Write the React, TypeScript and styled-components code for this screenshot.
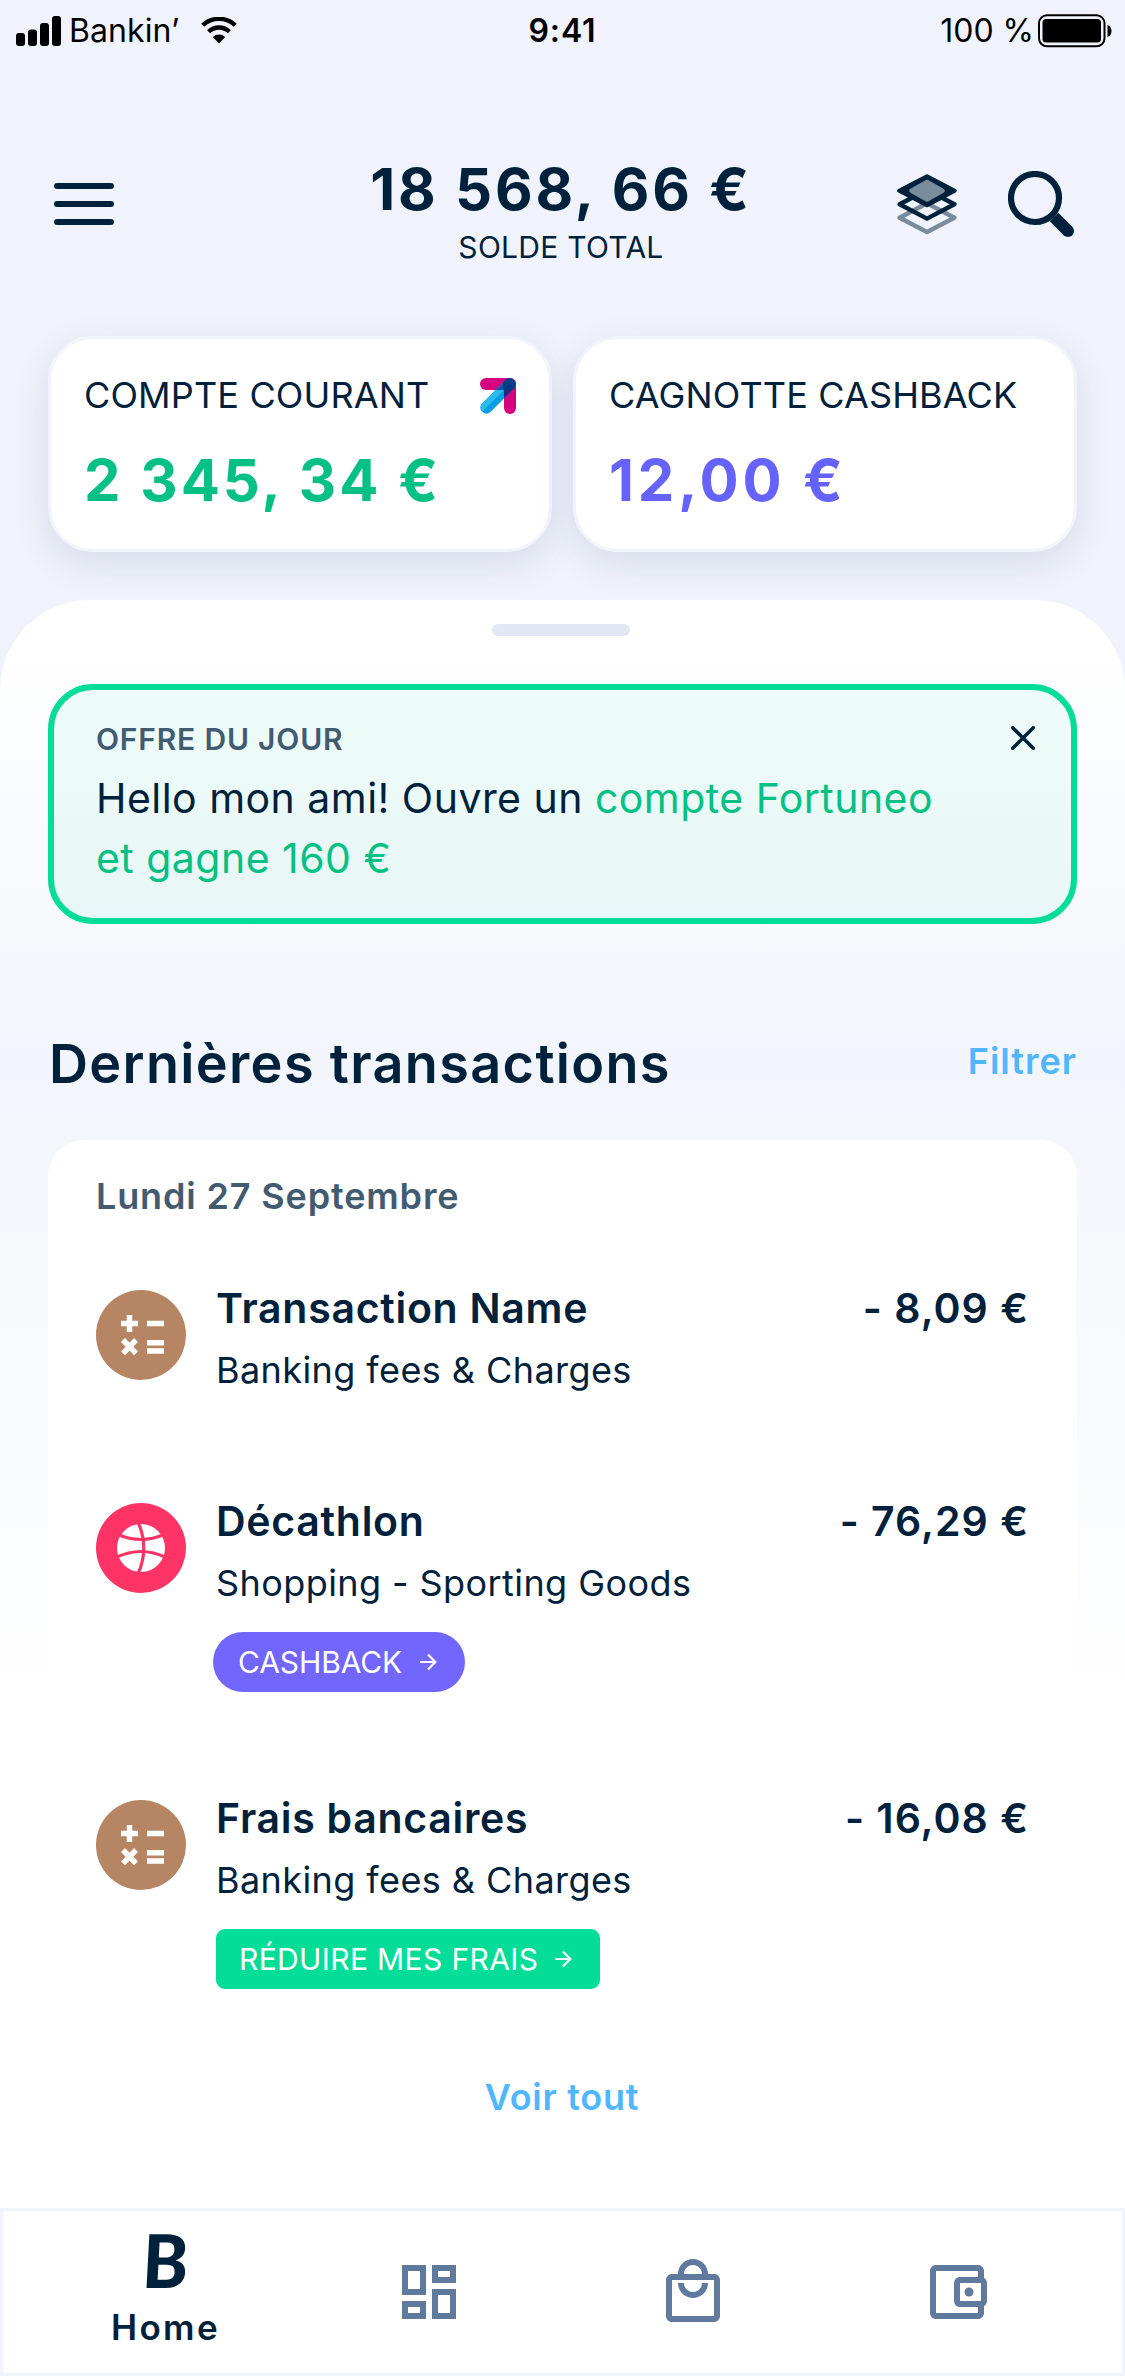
import React from "react";
import styled, { createGlobalStyle, css } from "styled-components";

const color = {
  ink: "#00213b",
  inkSoft: "#425b71",
  page: "#f0f3fb",
  mint: "#04dd98",
  green: "#04c083",
  violet: "#6562fe",
  lilac: "#7266ff",
  sky: "#50b6fd",
  tan: "#b68563",
  coral: "#ff3466",
  slate: "#607a9f",
};

const GlobalStyle = createGlobalStyle`
  * { box-sizing: border-box; }
  body {
    margin: 0;
    background: ${color.page};
    color: ${color.ink};
    font-family: Inter, "Liberation Sans", sans-serif;
  }
  h1, h2, h3, p { margin: 0; font-weight: inherit; }
  button { border: 0; padding: 0; background: none; font: inherit; color: inherit; }
  svg { display: block; flex: none; }
`;

const Screen = styled.div`
  width: 1125px;
  height: 2376px;
  display: flex;
  flex-direction: column;
  background: ${color.page};
  overflow: hidden;
`;

/* Status bar */

const StatusBar = styled.div`
  height: 61px;
  padding: 0 13px 0 16px;
  display: grid;
  grid-template-columns: 1fr auto 1fr;
  align-items: center;
  color: #000;
  font-size: 32px;
  line-height: 61px;
`;

const StatusSide = styled.div<{ $end?: boolean }>`
  display: flex;
  align-items: center;
  justify-content: ${p => (p.$end ? "flex-end" : "flex-start")};
`;

const Carrier = styled.span`
  margin: 0 22px 0 8px;
  letter-spacing: 0.1px;
`;

const Clock = styled.span`
  padding-right: 3px;
  font-weight: 600;
  letter-spacing: 0.9px;
`;

const BatteryLevel = styled.span`
  margin-right: 4px;
`;

/* Header */

const Header = styled.header`
  height: 275px;
  padding: 0 51px 0 54px;
  display: grid;
  grid-template-columns: 1fr auto 1fr;
  align-items: start;
`;

const MenuButton = styled.button`
  width: 60px;
  margin-top: 122px;
  display: flex;
  flex-direction: column;
  gap: 12px;
`;

const MenuBar = styled.span`
  height: 6px;
  border-radius: 3px;
  background: ${color.ink};
`;

const Balance = styled.div`
  padding: 98px 6px 0 0;
  text-align: center;
`;

const Amount = styled.p<{ $color?: string; $spacing: number }>`
  color: ${p => p.$color ?? color.ink};
  font-size: 58px;
  font-weight: 700;
  line-height: 60px;
  letter-spacing: ${p => p.$spacing}px;
  white-space: nowrap;
`;

const BalanceLabel = styled.p`
  margin-top: 8px;
  font-size: 30px;
  line-height: 40px;
  letter-spacing: 0.27px;
`;

const HeaderActions = styled.div`
  padding-top: 110px;
  display: flex;
  justify-content: flex-end;
  gap: 51px;
`;

/* Account cards */

const Accounts = styled.section`
  height: 264px;
  padding: 0 48px;
  display: grid;
  grid-template-columns: 1fr 1fr;
  gap: 21px;
  align-items: start;
`;

const AccountCard = styled.article`
  height: 216px;
  padding: 34px 33px 0;
  border: 3px solid #f1f4fc;
  border-radius: 45px;
  background: #fff;
  box-shadow: 0 12px 36px rgba(40, 58, 105, 0.12);
`;

const AccountHead = styled.div`
  margin-bottom: 32px;
  display: flex;
  justify-content: space-between;
  align-items: flex-start;
`;

const AccountName = styled.h3`
  font-size: 36px;
  line-height: 45px;
  letter-spacing: 0.15px;
  white-space: nowrap;
`;

const BankLogo = styled.svg`
  margin-top: 5px;
`;

/* Sheet */

const Sheet = styled.main`
  height: 1608px;
  padding: 24px 48px 0;
  display: flex;
  flex-direction: column;
  border-radius: 90px 90px 0 0;
  background: linear-gradient(#fff 0, #fff 36px, #f2f5fb 460px, #fff 1120px);
`;

const Handle = styled.div`
  width: 138px;
  height: 12px;
  margin-left: 444px;
  flex: none;
  border-radius: 6px;
  background: #e2e8f3;
`;

const Offer = styled.section`
  height: 240px;
  margin-top: 48px;
  padding: 29px 36px 0 42px;
  flex: none;
  display: flex;
  justify-content: space-between;
  align-items: flex-start;
  border: 6px solid ${color.mint};
  border-radius: 45px;
  background: rgba(4, 221, 152, 0.06);
`;

const OfferBody = styled.div`
  width: 880px;
`;

const OfferTag = styled.h3`
  color: ${color.inkSoft};
  font-size: 30px;
  font-weight: 600;
  line-height: 40px;
  letter-spacing: 0.8px;
`;

const OfferText = styled.p`
  margin-top: 9px;
  font-size: 41px;
  line-height: 60px;
  letter-spacing: 0.47px;
`;

const OfferLink = styled.span<{ $ownLine?: boolean }>`
  display: ${p => (p.$ownLine ? "block" : "inline")};
  color: ${color.green};
`;

const CloseButton = styled.button`
  margin-top: 7px;
`;

const SectionHead = styled.div`
  margin-top: 110px;
  display: flex;
  justify-content: space-between;
  align-items: flex-start;
`;

const SectionTitle = styled.h2`
  padding-left: 1px;
  font-size: 54px;
  font-weight: 600;
  line-height: 60px;
  letter-spacing: 1.34px;
`;

const TextLink = styled.button<{ $spacing: number }>`
  color: ${color.sky};
  font-size: 36px;
  font-weight: 600;
  line-height: 54px;
  letter-spacing: ${p => p.$spacing}px;
`;

const TransactionList = styled.section`
  margin-top: 46px;
  padding: 34px 48px 0;
  flex: 1;
  border-radius: 36px 36px 0 0;
  background: #fff;
`;

const Day = styled.h3`
  margin-bottom: 66px;
  color: ${color.inkSoft};
  font-size: 36px;
  font-weight: 600;
  line-height: 44px;
  letter-spacing: 0.85px;
`;

const Rows = styled.div`
  display: flex;
  flex-direction: column;
  gap: 102px;
`;

const Row = styled.article`
  min-height: 111px;
  display: grid;
  grid-template-columns: 90px 1fr auto;
  column-gap: 30px;
  align-items: start;
`;

const CategoryBadge = styled.div<{ $color: string }>`
  width: 90px;
  height: 90px;
  margin-top: 6px;
  border-radius: 50%;
  background: ${p => p.$color};
`;

const Details = styled.div`
  display: flex;
  flex-direction: column;
  align-items: flex-start;
`;

const rowHeading = css`
  font-size: 41px;
  font-weight: 600;
  line-height: 49px;
  white-space: nowrap;
`;

const Name = styled.h3`
  ${rowHeading}
  letter-spacing: 0.72px;
`;

const Price = styled.p`
  ${rowHeading}
  letter-spacing: 1px;
`;

const Category = styled.p`
  margin-top: 15px;
  font-size: 36px;
  line-height: 45px;
  letter-spacing: 0.42px;
`;

const Action = styled.button<{ $kind: "pill" | "box" }>`
  height: 60px;
  margin-top: 26px;
  display: flex;
  align-items: center;
  color: #fff;
  font-size: 30px;
  line-height: 60px;
  ${p =>
    p.$kind === "pill"
      ? css`
          width: 252px;
          margin-left: -3px;
          padding-left: 25px;
          gap: 18px;
          border-radius: 30px;
          background: ${color.lilac};
          letter-spacing: -0.1px;
        `
      : css`
          width: 384px;
          padding-left: 23px;
          gap: 17px;
          border-radius: 9px;
          background: ${color.mint};
          letter-spacing: 0.37px;
        `}
`;

const SeeAll = styled.div`
  margin-top: 81px;
  padding-right: 1px;
  display: flex;
  justify-content: center;
`;

/* Bottom navigation */

const Nav = styled.nav`
  height: 168px;
  padding-left: 30px;
  flex: none;
  display: grid;
  grid-template-columns: repeat(4, 264px);
  border: 3px solid #f1f4fd;
  background: #fff;
`;

const NavItem = styled.button<{ $active?: boolean }>`
  padding-top: ${p => (p.$active ? 19 : 45)}px;
  display: flex;
  flex-direction: column;
  align-items: center;
  justify-content: flex-start;
  color: ${p => (p.$active ? color.ink : color.slate)};
`;

const BrandInitial = styled.span`
  font-family: Lato, "Open Sans", sans-serif;
  font-size: 74px;
  font-style: italic;
  font-weight: 900;
  line-height: 60px;
  transform: skewX(4deg);
`;

const NavLabel = styled.span`
  margin-top: 17px;
  padding-left: 1px;
  font-size: 35px;
  font-weight: 600;
  line-height: 41px;
  letter-spacing: 2.4px;
`;

/* Icons */

const SignalIcon = () => (
  <svg width="45" height="30" viewBox="0 0 45 30">
    <rect x="0" y="17" width="9" height="13" rx="3" />
    <rect x="12" y="13.500" width="9" height="16.500" rx="3" />
    <rect x="24" y="7" width="9" height="23" rx="3" />
    <rect x="36" y="0" width="9" height="30" rx="3" />
  </svg>
);

const WifiIcon = () => (
  <svg width="36" height="27" viewBox="0 0 36 27" fill="none" stroke="#000" strokeWidth="4.300">
    <path d="M1.700 8.300a23.500 23.500 0 0 1 32.600 0" />
    <path d="M7.600 14.700a15 15 0 0 1 20.800 0" />
    <path d="M18 26.600l-6.200-6.600a9 9 0 0 1 12.400 0z" fill="#000" stroke="none" />
  </svg>
);

const BatteryIcon = () => (
  <svg width="74" height="34" viewBox="0 0 74 34">
    <rect x="1" y="1.300" width="65.500" height="31" rx="8" fill="none" stroke="#000" strokeWidth="2" />
    <rect x="4.500" y="5" width="58.500" height="23.500" rx="3.500" />
    <path d="M69.500 11c2.800 1 4 3.200 4 6s-1.200 5-4 6z" />
  </svg>
);

const LayersIcon = () => (
  <svg width="60" height="66" viewBox="0 -3 60 66" fill="none" strokeLinejoin="round">
    <path d="M30 29.300L57.400 43.700 30 58 2.600 43.700z" stroke="#798c9b" strokeWidth="4.400" />
    <path d="M30 16L57.400 30.300 30 44.600 2.600 30.300z" stroke={color.ink} strokeWidth="4.400" />
    <path d="M30 2.200L57.800 16.700 30 31.200 2.200 16.700z" fill={color.ink} stroke={color.ink} strokeWidth="4" />
    <path d="M30 8L45.500 16.700 30 25.500 14.500 16.700z" fill="#798c9b" stroke="#798c9b" strokeWidth="4.500" />
  </svg>
);

const SearchIcon = () => (
  <svg width="66" height="67" viewBox="0 0 66 67" fill="none" stroke={color.ink}>
    <circle cx="27" cy="27" r="24" strokeWidth="6.200" />
    <path d="M46 46L60 60" strokeWidth="12" />
    <path d="M60 60h.01" strokeWidth="12" strokeLinecap="round" />
  </svg>
);

const BankMark = () => (
  <BankLogo width="36" height="36" viewBox="0 0 36 36">
    <clipPath id="diagonal">
      <path d="M1.800 25.800L25.800 1.800A6 6 0 0 1 34.200 10.200L10.200 34.200A6 6 0 0 1 1.800 25.800z" />
    </clipPath>
    <clipPath id="barTop">
      <rect width="36" height="12" rx="6" />
    </clipPath>
    <rect width="36" height="12" rx="6" fill="#d5007f" />
    <rect x="24" width="12" height="36" rx="6" fill="#d5007f" />
    <g clipPath="url(#diagonal)">
      <rect width="36" height="36" fill="#009ee3" />
      <path d="M0 36V0h36z" fill="#2bbcee" />
      <rect x="24" width="12" height="36" fill="#24297d" />
      <g clipPath="url(#barTop)">
        <rect width="24" height="12" fill="#1f4fa0" />
        <rect x="23.300" width="13" height="12" fill="#003b86" />
      </g>
    </g>
  </BankLogo>
);

const CloseIcon = () => (
  <svg width="24" height="24" viewBox="0 0 24 24" stroke={color.ink} strokeWidth="3.500" strokeLinecap="round">
    <path d="M1.700 1.700L22.300 22.300M22.300 1.700L1.700 22.300" />
  </svg>
);

const MathIcon = () => (
  <svg width="90" height="90" viewBox="0 0 90 90" stroke="#fff" strokeWidth="5.500">
    <path d="M25 33.500h17M33.500 25v17M51 33.500h17M51 52.700h17M51 61h17" />
    <path d="M27 50l13 13.400M40 50L27 63.400" />
  </svg>
);

const BallIcon = () => (
  <svg width="90" height="90" viewBox="0 0 90 90" fill="none" stroke={color.coral} strokeWidth="3.200">
    <circle cx="45" cy="45" r="24" fill="#fff" stroke="none" />
    <path d="M42 19Q53.500 45 42 71" />
    <path d="M22 31.500Q45 41.500 68 31.500" />
    <path d="M20 54.500Q45 42.500 70 54.500" />
  </svg>
);

const ArrowIcon = () => (
  <svg width="17" height="18" viewBox="0 0 17 18" fill="none" stroke="#fff" strokeWidth="2.200">
    <path d="M0 9h15M8 1.500L15.300 9 8 16.500" />
  </svg>
);

const MaterialIcon = ({ d, children }: { d: string; children?: React.ReactNode }) => (
  <svg width="72" height="72" viewBox="0 0 24 24" fill="currentColor">
    <path d={d} />
    {children}
  </svg>
);

const DASHBOARD =
  "M19 5v2h-4V5h4M9 5v6H5V5h4m10 8v6h-4v-6h4M9 17v2H5v-2h4M21 3h-8v6h8V3zM11 3H3v10h8V3zm10 8h-8v10h8V11zm-10 4H3v6h8v-6z";
const BAG =
  "M19 6h-2c0-2.760-2.240-5-5-5S7 3.240 7 6H5c-1.100 0-2 .9-2 2v12c0 1.100.9 2 2 2h14c1.100 0 2-.9 2-2V8c0-1.100-.9-2-2-2zm-7-3c1.660 0 3 1.340 3 3H9c0-1.660 1.340-3 3-3zm7 17H5V8h14v12zm-7-8c-1.660 0-3-1.340-3-3H7c0 2.760 2.240 5 5 5s5-2.240 5-5h-2c0 1.660-1.340 3-3 3z";
const WALLET =
  "M21 7.280V5c0-1.100-.9-2-2-2H5c-1.110 0-2 .9-2 2v14c0 1.100.89 2 2 2h14c1.100 0 2-.9 2-2v-2.280c.59-.35 1-.98 1-1.720V9c0-.74-.41-1.370-1-1.720zM20 9v6h-7V9h7zM5 19V5h14v2h-6c-1.100 0-2 .9-2 2v6c0 1.100.9 2 2 2h6v2H5z";

type Transaction = {
  name: string;
  category: string;
  price: string;
  badge: string;
  icon: React.ReactNode;
  action?: { kind: "pill" | "box"; label: string };
};

const transactions: Transaction[] = [
  {
    name: "Transaction Name",
    category: "Banking fees & Charges",
    price: "- 8,09 €",
    badge: color.tan,
    icon: <MathIcon />,
  },
  {
    name: "Décathlon",
    category: "Shopping - Sporting Goods",
    price: "- 76,29 €",
    badge: color.coral,
    icon: <BallIcon />,
    action: { kind: "pill", label: "CASHBACK" },
  },
  {
    name: "Frais bancaires",
    category: "Banking fees & Charges",
    price: "- 16,08 €",
    badge: color.tan,
    icon: <MathIcon />,
    action: { kind: "box", label: "RÉDUIRE MES FRAIS" },
  },
];

export default function App() {
  return (
    <Screen>
      <GlobalStyle />
      <StatusBar>
        <StatusSide>
          <SignalIcon />
          <Carrier>Bankin’</Carrier>
          <WifiIcon />
        </StatusSide>
        <Clock>9:41</Clock>
        <StatusSide $end>
          <BatteryLevel>100 %</BatteryLevel>
          <BatteryIcon />
        </StatusSide>
      </StatusBar>

      <Header>
        <MenuButton aria-label="Menu">
          <MenuBar />
          <MenuBar />
          <MenuBar />
        </MenuButton>
        <Balance>
          <Amount $spacing={2.82}>18 568, 66 €</Amount>
          <BalanceLabel>SOLDE TOTAL</BalanceLabel>
        </Balance>
        <HeaderActions>
          <LayersIcon />
          <SearchIcon />
        </HeaderActions>
      </Header>

      <Accounts>
        <AccountCard>
          <AccountHead>
            <AccountName>COMPTE COURANT</AccountName>
            <BankMark />
          </AccountHead>
          <Amount $color={color.green} $spacing={2.98}>2 345, 34 €</Amount>
        </AccountCard>
        <AccountCard>
          <AccountHead>
            <AccountName>CAGNOTTE CASHBACK</AccountName>
          </AccountHead>
          <Amount $color={color.violet} $spacing={3.8}>12,00 €</Amount>
        </AccountCard>
      </Accounts>

      <Sheet>
        <Handle />
        <Offer>
          <OfferBody>
            <OfferTag>OFFRE DU JOUR</OfferTag>
            <OfferText>
              Hello mon ami! Ouvre un <OfferLink>compte Fortuneo</OfferLink>
              <OfferLink $ownLine>et gagne 160 €</OfferLink>
            </OfferText>
          </OfferBody>
          <CloseButton aria-label="Fermer">
            <CloseIcon />
          </CloseButton>
        </Offer>

        <SectionHead>
          <SectionTitle>Dernières transactions</SectionTitle>
          <TextLink $spacing={0.99}>Filtrer</TextLink>
        </SectionHead>

        <TransactionList>
          <Day>Lundi 27 Septembre</Day>
          <Rows>
            {transactions.map(t => (
              <Row key={t.name}>
                <CategoryBadge $color={t.badge}>{t.icon}</CategoryBadge>
                <Details>
                  <Name>{t.name}</Name>
                  <Category>{t.category}</Category>
                  {t.action && (
                    <Action $kind={t.action.kind}>
                      {t.action.label}
                      <ArrowIcon />
                    </Action>
                  )}
                </Details>
                <Price>{t.price}</Price>
              </Row>
            ))}
          </Rows>
          <SeeAll>
            <TextLink $spacing={0.73}>Voir tout</TextLink>
          </SeeAll>
        </TransactionList>
      </Sheet>

      <Nav>
        <NavItem $active>
          <BrandInitial>B</BrandInitial>
          <NavLabel>Home</NavLabel>
        </NavItem>
        <NavItem aria-label="Tableau de bord">
          <MaterialIcon d={DASHBOARD} />
        </NavItem>
        <NavItem aria-label="Boutique">
          <MaterialIcon d={BAG} />
        </NavItem>
        <NavItem aria-label="Portefeuille">
          <MaterialIcon d={WALLET}>
            <circle cx="16" cy="12" r="1.500" />
          </MaterialIcon>
        </NavItem>
      </Nav>
    </Screen>
  );
}
